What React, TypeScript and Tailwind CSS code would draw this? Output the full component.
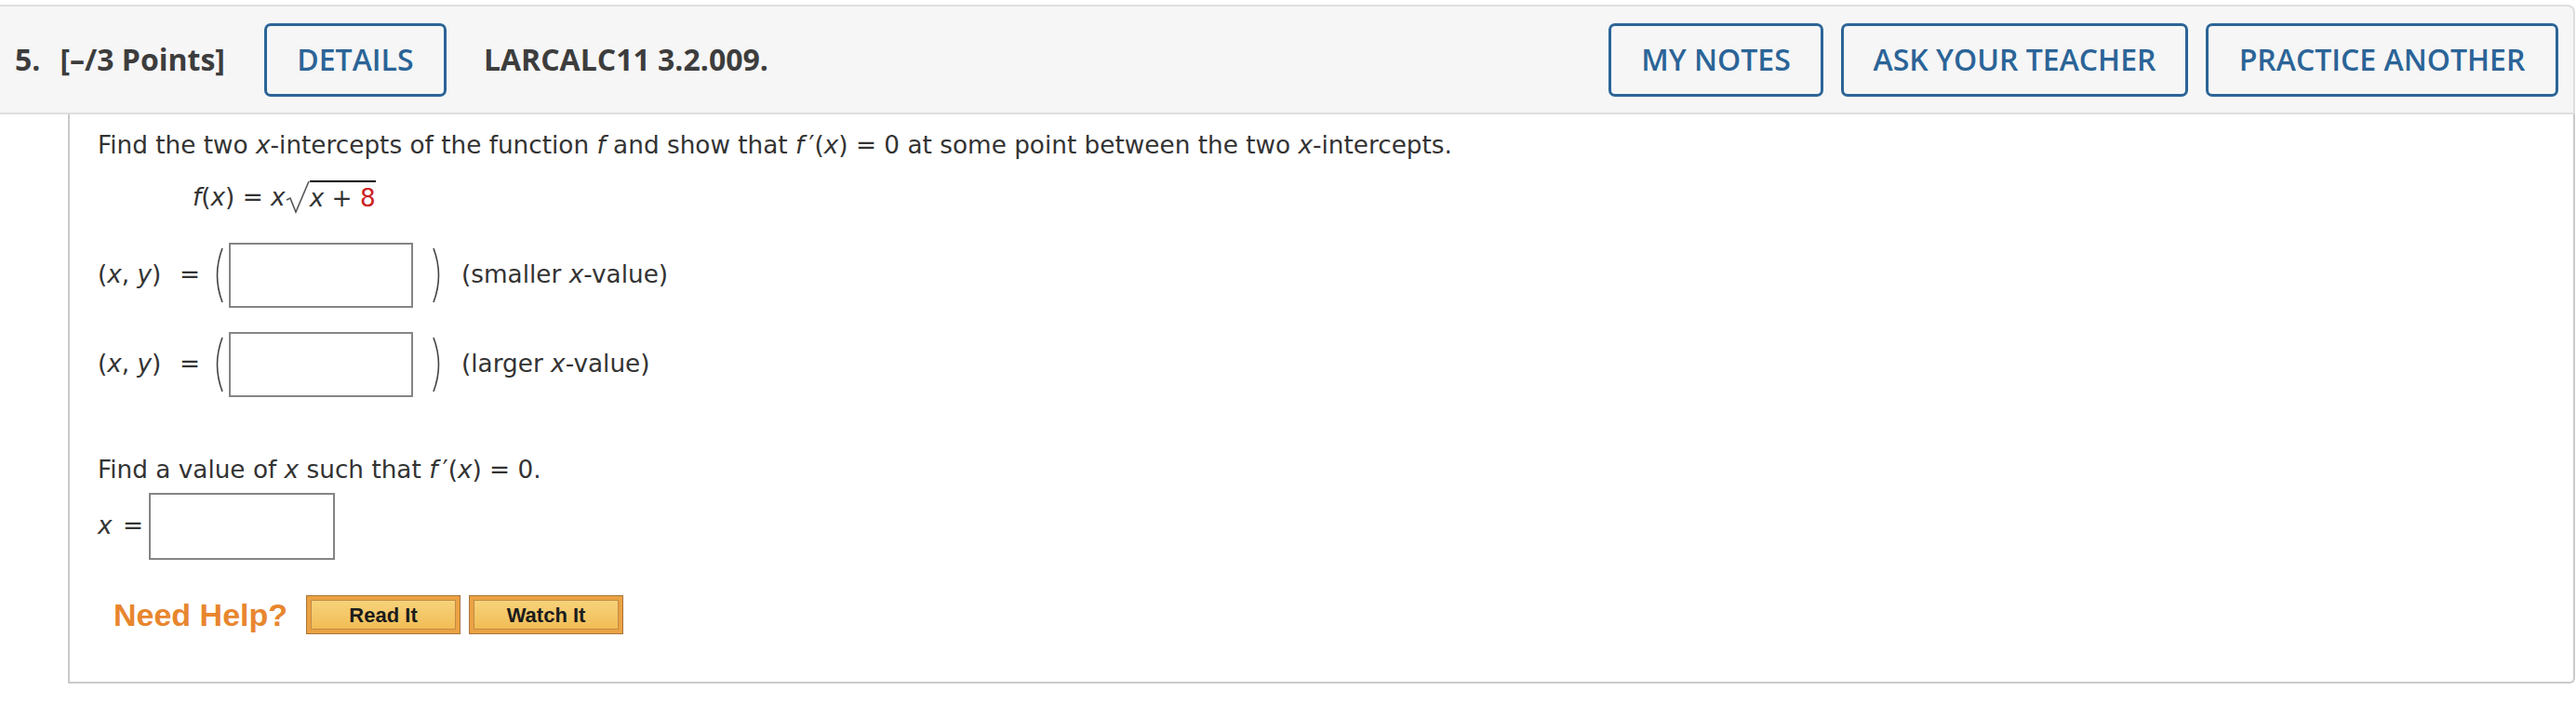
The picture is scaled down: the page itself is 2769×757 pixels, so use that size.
import React from 'react';

const V: React.FC<{ children: React.ReactNode }> = ({ children }) => <i className="italic">{children}</i>;

const Paren: React.FC<{ side: 'l' | 'r' }> = ({ side }) => (
  <svg width="14" height="60" viewBox="0 0 14 60" className="shrink-0">
    <path
      d={side === 'l' ? 'M12 1 Q1 30 12 59' : 'M2 1 Q13 30 2 59'}
      fill="none"
      stroke="#444"
      strokeWidth="1.6"
    />
  </svg>
);

const HeaderButton: React.FC<{ label: string; w: string }> = ({ label, w }) => (
  <button
    className={`${w} h-[79px] shrink-0 rounded-[7px] border-[3px] border-[#2b6497] bg-transparent text-[32px] font-semibold uppercase text-[#2b6497] flex items-center justify-center`}
  >
    {label}
  </button>
);

const AnswerBox: React.FC = () => (
  <div className="w-[198px] h-[70px] shrink-0 border-2 border-[#858585] bg-white" />
);

const PointRow: React.FC<{ hint: string }> = ({ hint }) => (
  <div className="flex items-center h-[70px]">
    <span className="w-[88px] shrink-0">
      (<V>x</V>, <V>y</V>)
    </span>
    <span className="w-[34px] shrink-0">=</span>
    <Paren side="l" />
    <span className="ml-[5px]"><AnswerBox /></span>
    <span className="ml-[20px]"><Paren side="r" /></span>
    <span className="ml-[18px]">
      ({hint} <V>x</V>-value)
    </span>
  </div>
);

const HelpButton: React.FC<{ label: string }> = ({ label }) => (
  <button className="w-[166px] h-[42px] border border-[#a8743a] bg-[#eba244] p-[4px] shrink-0">
    <div className="h-full w-full border border-[#c28a45] bg-gradient-to-b from-[#f7d27a] to-[#f1bd55] flex items-center justify-center text-[22px] font-bold text-[#1c1c1c] [font-family:'Liberation_Sans',Arial,sans-serif]">
      {label}
    </div>
  </button>
);

const App: React.FC = () => {
  return (
    <div className="w-[2769px] h-[757px] overflow-hidden bg-white text-[#333]">
      <header className="mt-[5px] w-[2768px] h-[118px] border-y-2 border-r-2 border-[#dedede] rounded-tr-[8px] bg-[#f6f6f6] flex items-center pl-[16px] pr-[16px] [font-family:'Open_Sans',sans-serif] text-[#3d3d3d]">
        <span className="text-[32px] font-bold">5.</span>
        <span className="ml-[21px] text-[32px] font-bold">[–/3 Points]</span>
        <div className="ml-[42px]">
          <HeaderButton label="Details" w="w-[196px]" />
        </div>
        <span className="ml-[40px] text-[32px] font-bold">LARCALC11 3.2.009.</span>
        <div className="ml-auto flex items-center gap-[19px]">
          <HeaderButton label="My Notes" w="w-[231px]" />
          <HeaderButton label="Ask Your Teacher" w="w-[373px]" />
          <HeaderButton label="Practice Another" w="w-[379px]" />
        </div>
      </header>

      <section className="ml-[73px] w-[2695px] border-l-2 border-b-2 border-r-2 border-[#cacaca] rounded-br-[6px] pl-[30px] pt-[15px] pb-[51px] text-[26.3px] [font-family:'DejaVu_Sans',Verdana,sans-serif]">
        <p className="h-[36px] leading-[36px]">
          Find the two <V>x</V>-intercepts of the function <V>f</V> and show that <V>f</V>&thinsp;′(<V>x</V>) = 0 at some point
          between the two <V>x</V>-intercepts.
        </p>

        <div className="mt-[19px] h-[40px] flex items-center pl-[102px]">
          <span>
            <V>f</V>(<V>x</V>) = <V>x</V>
          </span>
          <svg width="26" height="36" viewBox="0 0 26 36" className="shrink-0 -mt-[2px]">
            <path d="M1 21 L5 19 L11 34 L25 1" fill="none" stroke="#555" strokeWidth="1.6" />
          </svg>
          <span className="border-t-2 border-black leading-[30px] pt-[2px] -mt-[4px]">
            <V>x</V> + <span className="text-[#cc2222]">8</span>
          </span>
        </div>

        <div className="mt-[28px]">
          <PointRow hint="smaller" />
        </div>
        <div className="mt-[26px]">
          <PointRow hint="larger" />
        </div>

        <p className="mt-[60px] h-[36px] leading-[36px]">
          Find a value of <V>x</V> such that <V>f</V>&thinsp;′(<V>x</V>) = 0.
        </p>

        <div className="mt-[7px] h-[72px] flex items-center">
          <span className="w-[27px] shrink-0">
            <V>x</V>
          </span>
          <span className="w-[28px] shrink-0">=</span>
          <div className="w-[200px] h-[72px] border-2 border-[#858585] bg-white" />
        </div>

        <div className="mt-[38px] h-[42px] flex items-center pl-[17px]">
          <span className="text-[34px] font-bold text-[#e8862e] [font-family:'Liberation_Sans',Arial,sans-serif]">
            Need Help?
          </span>
          <div className="ml-[20px] flex items-center gap-[9px]">
            <HelpButton label="Read It" />
            <HelpButton label="Watch It" />
          </div>
        </div>
      </section>
    </div>
  );
};

export default App;
